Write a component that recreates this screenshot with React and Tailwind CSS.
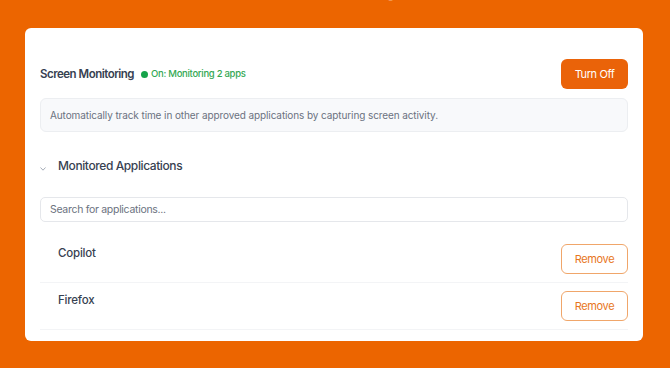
import React from 'react';

const apps = ['Copilot', 'Firefox'];

export default function App() {
  return (
    <div className="h-[368px] w-[670px] overflow-hidden bg-[#ec6500] font-['Inter',sans-serif]">
      <h1 className="-mt-[29px] h-[32px] text-center text-2xl font-semibold leading-8 text-white">Monitoring</h1>

      <div className="ml-[25px] mt-[25px] w-[618px] rounded-md bg-white px-[15px] pb-[11px] pt-[31px]">
        {/* header */}
        <div className="flex h-[30px] items-center justify-between">
          <div className="flex items-center pt-px">
            <span className="text-[11.5px] font-semibold tracking-[-0.5px] text-[#374151]">Screen Monitoring</span>
            <span className="ml-[7px] h-[7px] w-[7px] rounded-full bg-[#16a34a]" />
            <span className="ml-[3px] text-[9.5px] font-medium tracking-[-0.3px] text-[#34a853]">On: Monitoring 2 apps</span>
          </div>
          <button className="h-[30px] w-[67px] rounded-md bg-[#ea6309] text-[11px] tracking-[-0.4px] text-white">Turn Off</button>
        </div>

        <div className="mt-[9px] flex h-[34px] items-center rounded-md border border-[#eceef1] bg-[#f8f9fb] px-[9px]">
          <p className="text-[10px] tracking-[-0.1px] text-[#6b7280]">
            Automatically track time in other approved applications by capturing screen activity.
          </p>
        </div>

        <div className="mt-[24px] flex h-[20px] items-center">
          <svg className="mt-[6px] h-[4px] w-[6px] text-[#9ca3af]" viewBox="0 0 6 4" fill="none">
            <path d="M0.5 0.5 L3 3.2 L5.5 0.5" stroke="currentColor" strokeWidth="0.9" />
          </svg>
          <span className="ml-[12px] text-[12px] font-medium tracking-[-0.4px] text-[#374151]">Monitored Applications</span>
        </div>

        <input
          className="mt-[21px] block h-[25px] w-full rounded-[5px] border border-[#e5e7eb] px-[9px] text-[10.5px] tracking-[-0.3px] text-[#374151] outline-none placeholder:text-[#6b7280]"
          placeholder="Search for applications..."
        />

        <div className="mt-[14px]">
          {apps.map((name) => (
            <div key={name} className="flex items-start justify-between border-b border-[#f3f4f6] py-2">
              <span className="pl-[18px] text-[11.5px] font-medium leading-[18px] tracking-[-0.2px] text-[#374151]">{name}</span>
              <button className="h-[30px] w-[67px] rounded-md border border-[#f0a66a] text-[11px] tracking-[-0.4px] text-[#e8761c]">
                Remove
              </button>
            </div>
          ))}
        </div>
      </div>
    </div>
  );
}
